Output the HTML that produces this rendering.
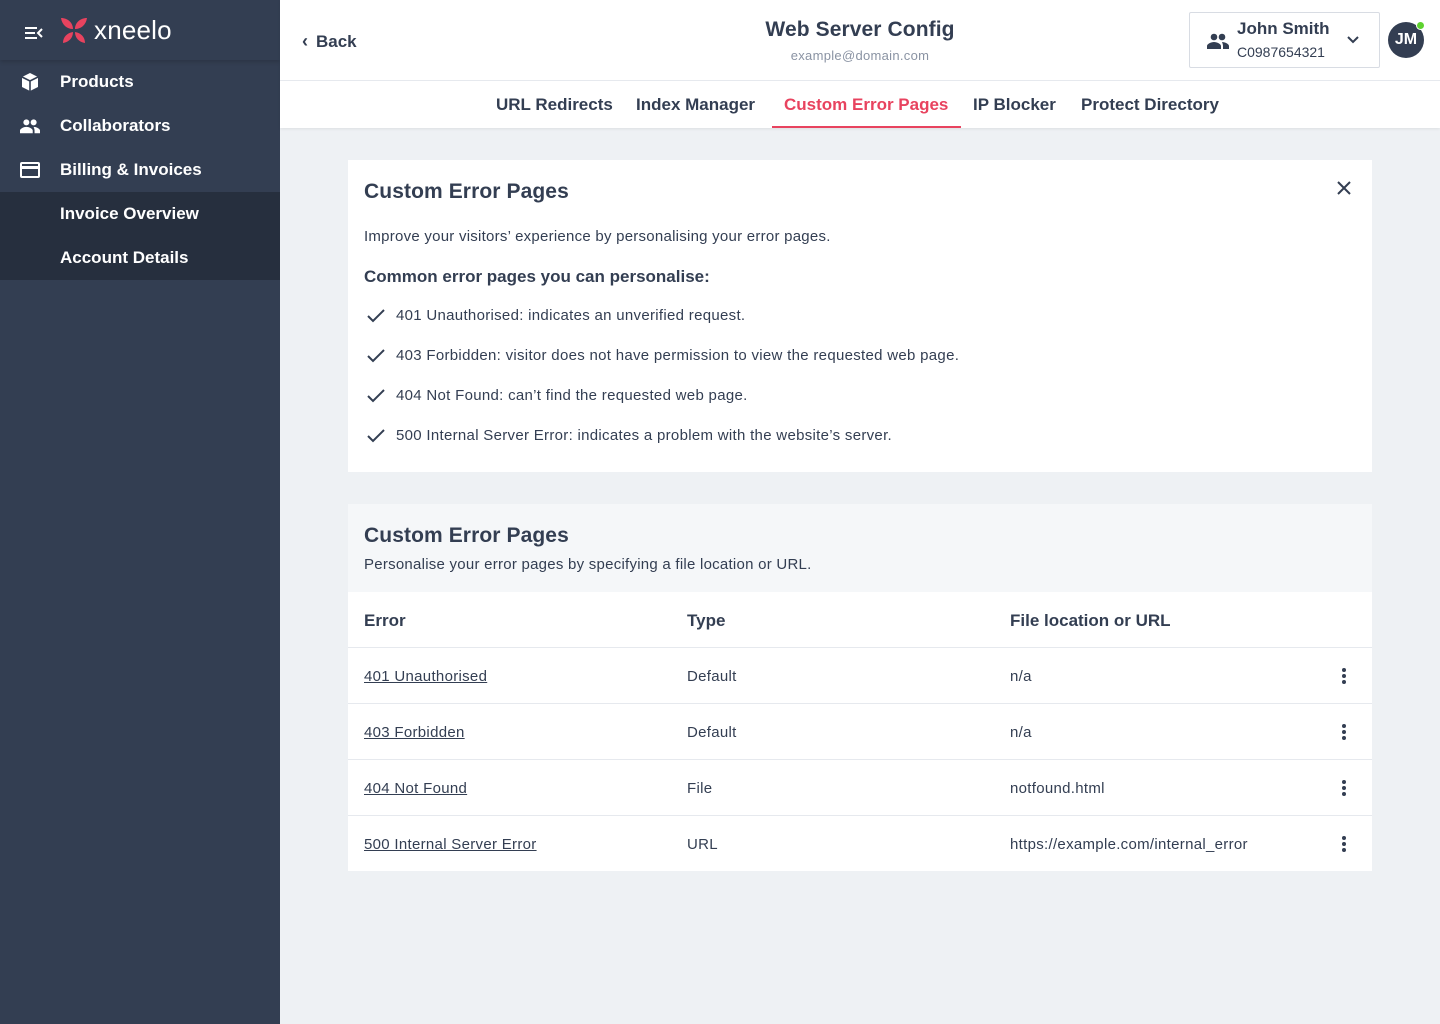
<!DOCTYPE html>
<html><head><meta charset="utf-8"><style>
*{box-sizing:border-box;margin:0;padding:0}
body{width:1440px;height:1024px;font-family:"Liberation Sans",sans-serif;color:#333e52;background:#eef1f4;position:relative;overflow:hidden}
.side{position:absolute;left:0;top:0;width:280px;height:1024px;background:#333e52;color:#fff}
.logo{height:60px;position:relative;background:#333e52;box-shadow:0 2px 4px rgba(0,0,0,.15)}
.nav{height:44px;display:flex;align-items:center;font-size:17px;font-weight:bold;letter-spacing:0}
.nav svg{margin-left:20px;margin-right:20px;flex:none}
.sub{background:#262f3e}
.sub .nav{padding-left:60px}
.top{position:absolute;left:280px;top:0;right:0;height:128px;background:#fff;box-shadow:0 1px 3px rgba(0,0,0,.08)}
.tabs{position:absolute;top:80px;left:0;right:0;height:48px;border-top:1px solid #e6e9ee}
.tab{position:absolute;top:14px;font-size:17px;font-weight:bold;letter-spacing:0}
.card{position:absolute;left:348px;width:1024px;background:#fff}
h2{font-size:21px;font-weight:bold;letter-spacing:.1px}
.p{font-size:15px;letter-spacing:.25px}
.chk{position:absolute;left:18px;font-size:15px;display:flex;align-items:center;letter-spacing:.3px}
.chk svg{margin-right:10px}
.row{position:absolute;left:0;right:0;height:56px;border-top:1px solid #e6e9ee;font-size:15px;letter-spacing:.3px}
.row span{position:absolute;top:20px}
.dots{position:absolute;right:26px;top:20px;width:4px}
.dots i{display:block;width:4px;height:4px;border-radius:2px;background:#333e52;margin-bottom:2px}
</style></head><body>
<div class="side">
 <div class="logo">
  <svg style="position:absolute;left:24px;top:26px" width="20" height="14" viewBox="0 0 20 14"><path d="M1 2h12M1 7h10M1 12h12M18 3l-4 4 4 4" stroke="#fff" stroke-width="2" fill="none"/></svg>
  <svg style="position:absolute;left:60px;top:17px" width="28" height="27" viewBox="0 0 28 27"><path d="M1 1c7 0 12 5 12 11C7 12 2 8 1 1zM27 1c-7 0-12 5-12 11 6 0 11-4 12-11zM3 26c0-6 4-10 10-11 0 6-4 10-10 11zM25 26c0-6-4-10-10-11 0 6 4 10 10 11z" fill="#e8435f"/></svg>
  <div style="position:absolute;left:94px;top:15px;font-size:26px;letter-spacing:.2px">xneelo</div>
 </div>
 <div class="nav"><svg width="20" height="20" viewBox="0 0 20 20"><path d="M10 1l8 4v10l-8 4-8-4V5z" fill="#fff"/><path d="M2 5l8 4 8-4M10 9v10" stroke="#333e52" stroke-width="1.6" fill="none"/></svg>Products</div>
 <div class="nav"><svg width="20" height="16" viewBox="0 0 22 16"><circle cx="7" cy="4" r="3.3" fill="#fff"/><circle cx="15" cy="4" r="3.3" fill="#fff"/><path d="M0 16v-3c0-2 4-4 7-4s7 2 7 4v3zM15 9c3 0 7 2 7 4v3h-6v-3c0-1.5-.5-2.5-1-4z" fill="#fff"/></svg>Collaborators</div>
 <div class="nav"><svg width="20" height="16" viewBox="0 0 20 16"><rect x="1" y="1" width="18" height="14" rx="1" stroke="#fff" stroke-width="2" fill="none"/><rect x="1" y="4" width="18" height="3" fill="#fff"/></svg>Billing &amp; Invoices</div>
 <div class="sub"><div class="nav">Invoice Overview</div><div class="nav">Account Details</div></div>
</div>
<div class="top">
 <div style="position:absolute;left:22px;top:31px;font-size:17px;font-weight:bold"><span style="font-size:18px;margin-right:8px">‹</span>Back</div>
 <div style="position:absolute;left:0;width:1160px;text-align:center;top:18px;font-size:21px;font-weight:bold;letter-spacing:.1px">Web Server Config</div>
 <div style="position:absolute;left:0;width:1160px;text-align:center;top:48px;font-size:13px;color:#8a93a3;letter-spacing:.3px">example@domain.com</div>
 <div style="position:absolute;left:909px;top:12px;width:191px;height:56px;border:1px solid #d8dce3;border-radius:2px">
  <svg style="position:absolute;left:17px;top:20px" width="22" height="16" viewBox="0 0 22 16"><circle cx="7" cy="4" r="3.3" fill="#333e52"/><circle cx="15" cy="4" r="3.3" fill="#333e52"/><path d="M0 16v-3c0-2 4-4 7-4s7 2 7 4v3zM15 9c3 0 7 2 7 4v3h-6v-3c0-1.5-.5-2.5-1-4z" fill="#333e52"/></svg>
  <div style="position:absolute;left:47px;top:6px;font-size:17px;font-weight:bold">John Smith</div>
  <div style="position:absolute;left:47px;top:31px;font-size:14px">C0987654321</div>
  <svg style="position:absolute;left:156px;top:22px" width="14" height="10" viewBox="0 0 14 10"><path d="M2 2l5 5 5-5" stroke="#333e52" stroke-width="2" fill="none"/></svg>
 </div>
 <div style="position:absolute;left:1108px;top:22px;width:36px;height:36px;border-radius:18px;background:#333e52;color:#fff;font-weight:bold;font-size:16px;text-align:center;line-height:36px">JM</div>
 <div style="position:absolute;left:1136px;top:21px;width:9px;height:9px;border-radius:5px;background:#5ed22f;border:1px solid #fff"></div>
 <div class="tabs">
  <div class="tab" style="left:216px">URL Redirects</div>
  <div class="tab" style="left:356px">Index Manager</div>
  <div class="tab" style="left:504px;color:#e8435f">Custom Error Pages</div>
  <div style="position:absolute;left:492px;width:189px;top:45px;height:2px;background:#e8435f"></div>
  <div class="tab" style="left:693px">IP Blocker</div>
  <div class="tab" style="left:801px">Protect Directory</div>
 </div>
</div>
<div class="card" style="top:160px;height:312px">
 <h2 style="position:absolute;left:16px;top:20px">Custom Error Pages</h2>
 <svg style="position:absolute;left:989px;top:21px" width="14" height="14" viewBox="0 0 14 14"><path d="M1 1l12 12M13 1L1 13" stroke="#333e52" stroke-width="2"/></svg>
 <div class="p" style="position:absolute;left:16px;top:68px">Improve your visitors’ experience by personalising your error pages.</div>
 <div style="position:absolute;left:16px;top:107px;font-size:17px;font-weight:bold">Common error pages you can personalise:</div>
 <div class="chk" style="top:147px"><svg width="20" height="16" viewBox="0 0 20 16"><path d="M2 8l5 5L18 2" stroke="#333e52" stroke-width="2" fill="none"/></svg>401 Unauthorised: indicates an unverified request.</div>
 <div class="chk" style="top:187px"><svg width="20" height="16" viewBox="0 0 20 16"><path d="M2 8l5 5L18 2" stroke="#333e52" stroke-width="2" fill="none"/></svg>403 Forbidden: visitor does not have permission to view the requested web page.</div>
 <div class="chk" style="top:227px"><svg width="20" height="16" viewBox="0 0 20 16"><path d="M2 8l5 5L18 2" stroke="#333e52" stroke-width="2" fill="none"/></svg>404 Not Found: can’t find the requested web page.</div>
 <div class="chk" style="top:267px"><svg width="20" height="16" viewBox="0 0 20 16"><path d="M2 8l5 5L18 2" stroke="#333e52" stroke-width="2" fill="none"/></svg>500 Internal Server Error: indicates a problem with the website’s server.</div>
</div>
<div class="card" style="top:504px;height:367px">
 <div style="position:absolute;left:0;top:0;width:1024px;height:88px;background:#f5f7f9"></div>
 <h2 style="position:absolute;left:16px;top:20px">Custom Error Pages</h2>
 <div class="p" style="position:absolute;left:16px;top:52px">Personalise your error pages by specifying a file location or URL.</div>
 <div style="position:absolute;top:107px;left:16px;font-size:17px;font-weight:bold">Error</div>
 <div style="position:absolute;top:107px;left:339px;font-size:17px;font-weight:bold">Type</div>
 <div style="position:absolute;top:107px;left:662px;font-size:17px;font-weight:bold">File location or URL</div>
 <div class="row" style="top:143px"><span style="left:16px;text-decoration:underline">401 Unauthorised</span><span style="left:339px">Default</span><span style="left:662px">n/a</span><div class="dots"><i></i><i></i><i></i></div></div>
 <div class="row" style="top:199px"><span style="left:16px;text-decoration:underline">403 Forbidden</span><span style="left:339px">Default</span><span style="left:662px">n/a</span><div class="dots"><i></i><i></i><i></i></div></div>
 <div class="row" style="top:255px"><span style="left:16px;text-decoration:underline">404 Not Found</span><span style="left:339px">File</span><span style="left:662px">notfound.html</span><div class="dots"><i></i><i></i><i></i></div></div>
 <div class="row" style="top:311px"><span style="left:16px;text-decoration:underline">500 Internal Server Error</span><span style="left:339px">URL</span><span style="left:662px">https://example.com/internal_error</span><div class="dots"><i></i><i></i><i></i></div></div>
</div>
</body></html>
